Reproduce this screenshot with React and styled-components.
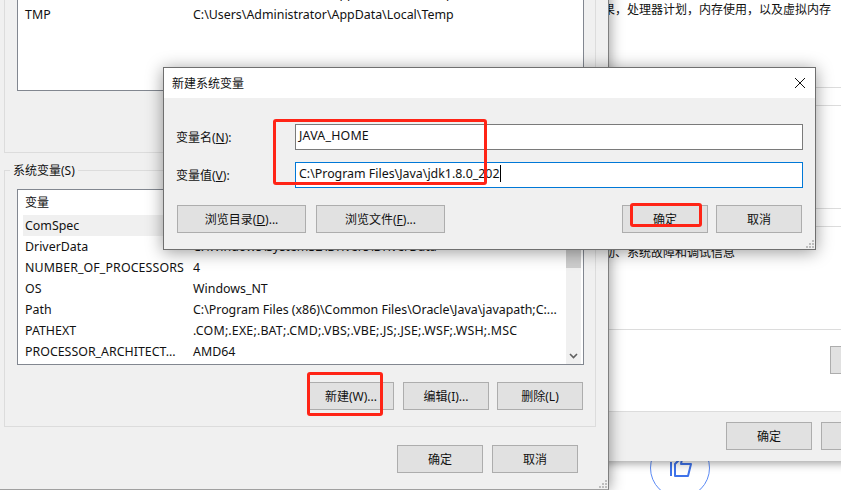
import React from "react";
import styled, { createGlobalStyle } from "styled-components";

const Global = createGlobalStyle`
    html, body {
        margin: 0;
        height: 100%;
        overflow: hidden;
        background: #fff;
    }
    body {
        font-family: "Noto Sans", "Noto Sans CJK SC", sans-serif;
        font-size: 12px;
        color: #111;
    }
    * { box-sizing: border-box; }
`

const Desktop = styled.div`
    position: relative;
    width: 841px;
    height: 490px;
    overflow: hidden;
    background: #fff;
`

/* back window, mostly hidden */
const BackWindow = styled.div`
    position: absolute;
    left: 560px;
    top: 0;
    width: 420px;
    height: 461px;
    background: #fff;
    box-shadow: 0 2px 9px rgba(0, 0, 0, 0.4);
    display: flex;
    flex-direction: column;
`

const Section = styled.div`
    height: ${(props) => props.$h}px;
    padding-top: ${(props) => props.$pad || 0}px;
    padding-left: ${(props) => props.$left || 0}px;
    border-bottom: 1px solid #dcdcdc;
    line-height: 16px;
    white-space: nowrap;
`

const BackFooter = styled.div`
    flex: 1;
    background: #f0f0f0;
    display: flex;
    gap: 9px;
    padding: 10px 0 0 166px;
`

const Btn = styled.div`
    width: ${(props) => props.$w || 86}px;
    height: 28px;
    flex: none;
    display: flex;
    align-items: center;
    justify-content: center;
    background: #e1e1e1;
    border: 1px solid #adadad;
    white-space: nowrap;
    margin-right: ${(props) => props.$mr || 0}px;
`

const EnvWindow = styled.div`
    position: absolute;
    left: 0;
    top: -32px;
    width: 609px;
    height: 522px;
    padding: 7px 12px 0 4px;
    background: #f0f0f0;
    border-right: 1px solid #7f7f7f;
    border-bottom: 1px solid #a0a0a0;
    box-shadow: 0 0 14px rgba(0, 0, 0, 0.45);
    display: flex;
    flex-direction: column;
`

const Group = styled.div`
    position: relative;
    height: ${(props) => props.$h}px;
    margin-top: ${(props) => props.$top || 0}px;
    padding: ${(props) => props.$pad}px 11px 0 12px;
    border: 1px solid #dcdcdc;
    flex: none;
`

const GroupLabel = styled.div`
    position: absolute;
    left: 5px;
    top: -9px;
    padding: 0 3px;
    line-height: 18px;
    background: #f0f0f0;
`

const List = styled.div`
    height: ${(props) => props.$h}px;
    background: #fff;
    border: 1px solid #828790;
    display: flex;
    overflow: hidden;
`

const Rows = styled.div`
    flex: 1;
    min-width: 0;
    padding-left: 5px;
    padding-top: ${(props) => props.$top || 0}px;
`

const ListHead = styled.div`
    height: 25px;
    padding-left: 2px;
    line-height: 25px;
`

const Row = styled.div`
    height: 21px;
    padding-left: 2px;
    display: grid;
    grid-template-columns: 168px 1fr;
    font-size: 12.4px;
    line-height: 21px;
    white-space: nowrap;
    background: ${(props) => (props.$active ? "#f0f0f0" : "transparent")};
`

const Cell = styled.span`
    letter-spacing: ${(props) => props.$ls || 0}px;
`

const Track = styled.div`
    width: 15px;
    margin-right: 2px;
    flex: none;
    background: #f0f0f0;
    display: flex;
    flex-direction: column;
    align-items: center;
`

const Thumb = styled.div`
    width: 100%;
    height: 60px;
    margin-top: 18px;
    background: #cdcdcd;
`

const TrackArrow = styled.svg`
    margin-top: auto;
    margin-bottom: 5px;
`

const ButtonRow = styled.div`
    display: flex;
    justify-content: flex-end;
    gap: 8px;
    padding-right: 1px;
    margin-top: 17px;
`

const WindowFooter = styled.div`
    display: flex;
    justify-content: flex-end;
    gap: 9px;
    margin: 18px 18px 0 0;
`

const Dialog = styled.div`
    position: absolute;
    left: 163px;
    top: 67px;
    width: 653px;
    height: 183px;
    background: #f0f0f0;
    border: 1px solid #6f6f6f;
    box-shadow: 0 2px 16px rgba(0, 0, 0, 0.4);
    display: flex;
    flex-direction: column;
`

const TitleBar = styled.div`
    height: 30px;
    flex: none;
    background: #fff;
    padding: 0 10px 0 8px;
    display: flex;
    align-items: center;
    justify-content: space-between;
`

const DialogBody = styled.div`
    flex: 1;
    padding: 26px 12px 0 12px;
`

const FormRow = styled.div`
    display: grid;
    grid-template-columns: 119px 1fr;
    align-items: center;
    margin-bottom: 12px;
`

const FieldBox = styled.div`
    height: 26px;
    padding: 0 0 4px 3px;
    background: #fff;
    border: 1px solid ${(props) => (props.$focus ? "#0078d7" : "#7a7a7a")};
    display: flex;
    align-items: center;
    font-size: 12.4px;
    letter-spacing: ${(props) => props.$ls || 0}px;
    white-space: nowrap;
`

const Caret = styled.span`
    width: 1px;
    height: 17px;
    background: #000;
`

const DialogButtons = styled.div`
    display: flex;
    margin-top: 17px;
    padding: 0 1px;
    gap: 10px;
`

const DialogActions = styled.div`
    display: flex;
    gap: 8px;
    margin-left: auto;
`

const Grip = styled.svg`
    position: absolute;
    right: 1px;
    bottom: 1px;
`

const Mark = styled.div`
    position: absolute;
    left: ${(props) => props.$x}px;
    top: ${(props) => props.$y}px;
    width: ${(props) => props.$w}px;
    height: ${(props) => props.$h}px;
    border: 3px solid #ff2416;
    border-radius: 3px;
`

const LikeBadge = styled.svg`
    position: absolute;
    left: 640px;
    top: 430px;
`

const userRows = [
    { name: "TEMP", value: "C:\\Users\\Administrator\\AppData\\Local\\Temp" },
    { name: "TMP", value: "C:\\Users\\Administrator\\AppData\\Local\\Temp" },
]

const systemRows = [
    { name: "ComSpec", value: "C:\\Windows\\system32\\cmd.exe" },
    { name: "DriverData", value: "C:\\Windows\\System32\\Drivers\\DriverData" },
    { name: "NUMBER_OF_PROCESSORS", value: "4", nameLs: 0.1 },
    { name: "OS", value: "Windows_NT" },
    { name: "Path", value: "C:\\Program Files (x86)\\Common Files\\Oracle\\Java\\javapath;C:..." },
    { name: "PATHEXT", value: ".COM;.EXE;.BAT;.CMD;.VBS;.VBE;.JS;.JSE;.WSF;.WSH;.MSC", valueLs: 0.17 },
    { name: "PROCESSOR_ARCHITECT...", value: "AMD64" },
]

const ResizeGrip = () => (
    <Grip width="8" height="8" viewBox="0 0 8 8" fill="#bdbdbd">
        <rect x="6" y="0" width="2" height="2" />
        <rect x="3" y="3" width="2" height="2" />
        <rect x="6" y="3" width="2" height="2" />
        <rect x="0" y="6" width="2" height="2" />
        <rect x="3" y="6" width="2" height="2" />
        <rect x="6" y="6" width="2" height="2" />
    </Grip>
)

const VarRow = ({ row, active }) => (
    <Row $active={active}>
        <Cell $ls={row.nameLs}>{row.name}</Cell>
        <Cell $ls={row.valueLs}>{row.value}</Cell>
    </Row>
)

const App = () => {
    return (
        <Desktop>
            <Global />

            <LikeBadge width="80" height="60" viewBox="0 0 80 60" fill="none">
                <circle cx="40" cy="38" r="29.5" stroke="#5b8af5" strokeWidth="1" />
                <path d="M31 32v14" stroke="#3f73ea" strokeWidth="2" />
                <path d="M35 46V34l6-6 1 1-1 5h10l-3 12z" stroke="#3f73ea" strokeWidth="2" strokeLinejoin="round" />
            </LikeBadge>

            <BackWindow>
                <Section $h={88} $pad={2} $left={7}>视觉效果，处理器计划，内存使用，以及虚拟内存</Section>
                <Section $h={18} />
                <Section $h={103} />
                <Section $h={18} />
                <Section $h={103} $pad={18} $left={7}>系统启动、系统故障和调试信息</Section>
                <Section $h={82} $pad={16} $left={270}>
                    <Btn />
                </Section>
                <BackFooter>
                    <Btn>确定</Btn>
                    <Btn>取消</Btn>
                </BackFooter>
            </BackWindow>

            <EnvWindow>
                <Group $h={178} $pad={4}>
                    <List $h={111}>
                        <Rows $top={2}>
                            {userRows.map((row) => (
                                <VarRow key={row.name} row={row} />
                            ))}
                        </Rows>
                    </List>
                </Group>

                <Group $h={257} $top={17} $pad={18}>
                    <GroupLabel>系统变量(S)</GroupLabel>
                    <List $h={176}>
                        <Rows>
                            <ListHead>变量</ListHead>
                            {systemRows.map((row, i) => (
                                <VarRow key={row.name} row={row} active={i === 0} />
                            ))}
                        </Rows>
                        <Track>
                            <Thumb />
                            <TrackArrow width="9" height="6" viewBox="0 0 9 6" fill="none">
                                <path d="M1 1l3.5 3.5L8 1" stroke="#606060" strokeWidth="1.6" />
                            </TrackArrow>
                        </Track>
                    </List>
                    <ButtonRow>
                        <Btn $mr={1}>新建(W)...</Btn>
                        <Btn>编辑(I)...</Btn>
                        <Btn>删除(L)</Btn>
                    </ButtonRow>
                </Group>

                <WindowFooter>
                    <Btn>确定</Btn>
                    <Btn>取消</Btn>
                </WindowFooter>
                <ResizeGrip />
            </EnvWindow>

            <Dialog>
                <TitleBar>
                    <span>新建系统变量</span>
                    <svg width="10" height="10" viewBox="0 0 10 10" fill="none">
                        <path d="M0 0l10 10M10 0L0 10" stroke="#111" strokeWidth="1" />
                    </svg>
                </TitleBar>
                <DialogBody>
                    <FormRow>
                        <span>变量名(<u>N</u>):</span>
                        <FieldBox $ls={0.2}>JAVA_HOME</FieldBox>
                    </FormRow>
                    <FormRow>
                        <span>变量值(<u>V</u>):</span>
                        <FieldBox $focus>C:\Program Files\Java\jdk1.8.0_202<Caret /></FieldBox>
                    </FormRow>
                    <DialogButtons>
                        <Btn $w={129}>浏览目录(<u>D</u>)...</Btn>
                        <Btn $w={129}>浏览文件(<u>F</u>)...</Btn>
                        <DialogActions>
                            <Btn>确定</Btn>
                            <Btn>取消</Btn>
                        </DialogActions>
                    </DialogButtons>
                </DialogBody>
                <ResizeGrip />
            </Dialog>

            <Mark $x={273} $y={119} $w={214} $h={66} />
            <Mark $x={630} $y={203} $w={72} $h={24} />
            <Mark $x={307} $y={372} $w={76} $h={44} />
        </Desktop>
    );
};

export default App;
